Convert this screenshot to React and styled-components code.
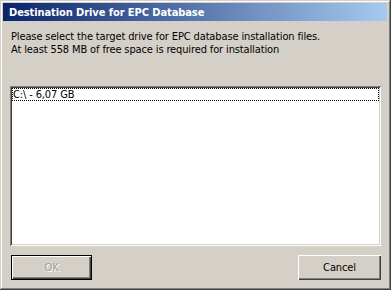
import React from "react";
import styled, { createGlobalStyle } from "styled-components";

const Global = createGlobalStyle`
  html, body { margin: 0; padding: 0; background: #D4D0C8; }
  * { box-sizing: border-box; }
`;

const Window = styled.div`
  width: 391px;
  height: 290px;
  background: #D4D0C8;
  padding: 3px 4px 3px 3px;
  display: flex;
  flex-direction: column;
  font-family: "DejaVu Sans Condensed", "DejaVu Sans", sans-serif;
  font-size: 11px;
  letter-spacing: -0.13px;
  color: #000;
  box-shadow: inset -1px -1px #404040, inset 1px 1px #D4D0C8,
    inset -2px -2px #808080, inset 2px 2px #FFFFFF;
`;

const TitleBar = styled.div`
  height: 18px;
  display: flex;
  align-items: center;
  padding-left: 6px;
  background: linear-gradient(to right, #0A246A, #A6CAF0);
  color: #fff;
  font-weight: bold;
  font-size: 11px;
  letter-spacing: -0.08px;
`;

const Body = styled.div`
  flex: 1;
  display: flex;
  flex-direction: column;
  padding: 9px 6px 0 7px;
`;

const Message = styled.p`
  margin: 0 0 30px 1px;
  line-height: 13px;
`;

const ListBox = styled.div`
  height: 160px;
  background: #fff;
  padding: 2px;
  box-shadow: inset 1px 1px #808080, inset -1px -1px #FFFFFF,
    inset 2px 2px #404040, inset -2px -2px #D4D0C8;
`;

const ListItem = styled.div`
  height: 13px;
  line-height: 13px;
  padding-left: 1px;
  outline: 1px dotted #000;
  outline-offset: -1px;
  white-space: pre;
`;

const ButtonRow = styled.div`
  display: flex;
  justify-content: space-between;
  margin-top: 9px;
  padding-left: 1px;
`;

const Button = styled.button`
  width: ${(p) => p.$w}px;
  height: 25px;
  padding: 0;
  font-family: inherit;
  font-size: 11px;
  letter-spacing: inherit;
  background: #D4D0C8;
  border: none;
  color: ${(p) => (p.disabled ? "#A09C94" : "#000")};
  text-shadow: ${(p) => (p.disabled ? "1px 1px #FFFFFF" : "none")};
  box-shadow: ${(p) =>
    p.$default
      ? "inset 0 0 0 1px #000, inset 2px 2px #FFFFFF, inset -2px -2px #404040, inset -3px -3px #808080"
      : "inset 1px 1px #FFFFFF, inset -1px -1px #404040, inset -2px -2px #808080"};
`;

export default function App() {
  return (
    <>
      <Global />
      <Window>
        <TitleBar>Destination Drive for EPC Database</TitleBar>
        <Body>
          <Message>
            Please select the target drive for EPC database installation files.
            <br />
            At least 558 MB of free space is required for installation
          </Message>
          <ListBox>
            <ListItem>{"C:\\ - 6,07 GB"}</ListItem>
          </ListBox>
          <ButtonRow>
            <Button $w={81} $default disabled>
              OK
            </Button>
            <Button $w={83}>Cancel</Button>
          </ButtonRow>
        </Body>
      </Window>
    </>
  );
}
